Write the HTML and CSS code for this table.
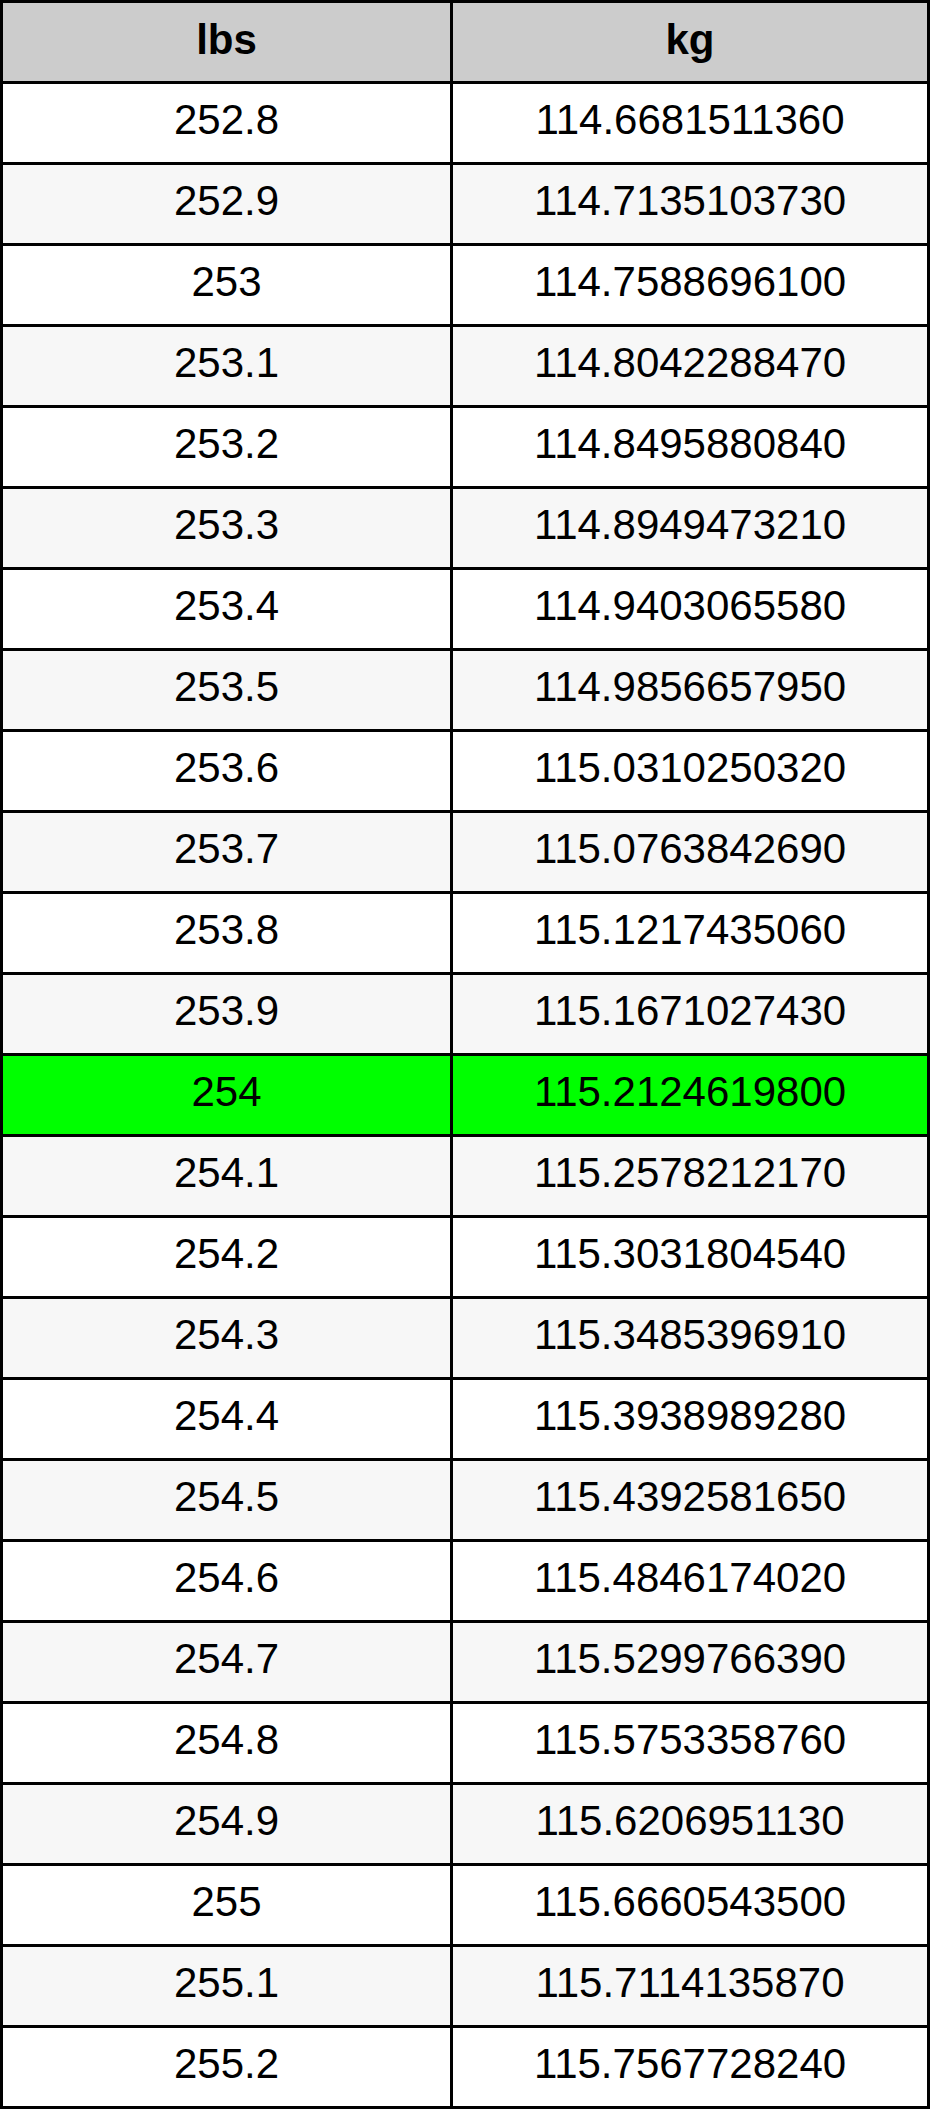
FILE: index.html
```html
<!DOCTYPE html>
<html lang="en">
<head>
<meta charset="utf-8">
<title>lbs to kg</title>
<link rel="stylesheet" href="styles.css">
</head>
<body>
<table class="conv">
<colgroup><col class="c1"><col class="c2"></colgroup>
<thead>
<tr><th>lbs</th><th>kg</th></tr>
</thead>
<tbody>
<tr><td>252.8</td><td>114.6681511360</td></tr>
<tr><td>252.9</td><td>114.7135103730</td></tr>
<tr><td>253</td><td>114.7588696100</td></tr>
<tr><td>253.1</td><td>114.8042288470</td></tr>
<tr><td>253.2</td><td>114.8495880840</td></tr>
<tr><td>253.3</td><td>114.8949473210</td></tr>
<tr><td>253.4</td><td>114.9403065580</td></tr>
<tr><td>253.5</td><td>114.9856657950</td></tr>
<tr><td>253.6</td><td>115.0310250320</td></tr>
<tr><td>253.7</td><td>115.0763842690</td></tr>
<tr><td>253.8</td><td>115.1217435060</td></tr>
<tr><td>253.9</td><td>115.1671027430</td></tr>
<tr class="hl"><td>254</td><td>115.2124619800</td></tr>
<tr><td>254.1</td><td>115.2578212170</td></tr>
<tr><td>254.2</td><td>115.3031804540</td></tr>
<tr><td>254.3</td><td>115.3485396910</td></tr>
<tr><td>254.4</td><td>115.3938989280</td></tr>
<tr><td>254.5</td><td>115.4392581650</td></tr>
<tr><td>254.6</td><td>115.4846174020</td></tr>
<tr><td>254.7</td><td>115.5299766390</td></tr>
<tr><td>254.8</td><td>115.5753358760</td></tr>
<tr><td>254.9</td><td>115.6206951130</td></tr>
<tr><td>255</td><td>115.6660543500</td></tr>
<tr><td>255.1</td><td>115.7114135870</td></tr>
<tr><td>255.2</td><td>115.7567728240</td></tr>
</tbody>
</table>
</body>
</html>
```

FILE: styles.css
```css
html, body {
  margin: 0;
  padding: 0;
  background: #ffffff;
}

.conv {
  width: 930px;
  table-layout: fixed;
  border-collapse: separate;
  border-spacing: 0;
  border-top: 3px solid #000;
  border-left: 3px solid #000;
  font-family: "Liberation Sans", Arial, sans-serif;
  font-size: 42px;
  color: #000;
}

.conv .c1 { width: 450px; }
.conv .c2 { width: 477px; }

.conv th,
.conv td {
  border-right: 3px solid #000;
  border-bottom: 3px solid #000;
  padding: 12px 0 19px 0;
  line-height: 47px;
  height: 47px;
  text-align: center;
  white-space: nowrap;
}

.conv th {
  background: #cccccc;
  font-weight: bold;
  padding-top: 13px;
  padding-bottom: 18px;
}

.conv td {
  font-weight: normal;
  background: #ffffff;
}

.conv tbody tr:nth-child(even) td {
  background: #f7f7f7;
}

.conv tbody tr.hl td {
  background: #00ff00;
}
```
